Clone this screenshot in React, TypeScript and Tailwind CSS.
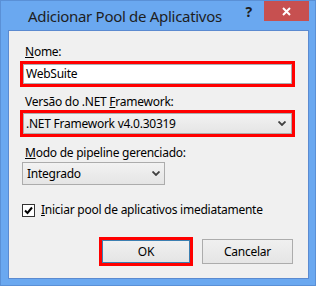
import React from "react";

const font = { fontFamily: '"Noto Sans", "Segoe UI", sans-serif' };

function Chevron() {
  return (
    <svg width="8" height="5" viewBox="0 0 8 5" className="block">
      <path d="M0.5 0.5 L4 4 L7.5 0.5" fill="none" stroke="#404040" strokeWidth="1.8" />
    </svg>
  );
}

export default function App() {
  return (
    <div
      className="w-[316px] h-[286px] bg-[#6aa8f0] border border-[#5a90d6] flex flex-col text-[12px] tracking-[-0.25px] text-black overflow-hidden"
      style={font}
    >
      {/* title bar */}
      <div className="h-[29px] flex items-start shrink-0">
        <div className="w-[27px]" />
        <div className="text-[15px] leading-[20px] mt-[5px] text-[#1e1e1e] tracking-[-0.3px]">
          Adicionar Pool de Aplicativos
        </div>
        <div className="flex-1" />
        <div className="mt-[3px] mr-[12px] text-[14px] font-bold leading-[16px] text-[#1e1e1e]">?</div>
        <div className="w-[45px] h-[20px] bg-[#c75050] flex items-center justify-center mr-[6px]">
          <svg width="9" height="9" viewBox="0 0 9 9">
            <path d="M1 1 L8 8 M8 1 L1 8" stroke="#fff" strokeWidth="2" />
          </svg>
        </div>
      </div>

      {/* content */}
      <div className="ml-[7px] w-[301px] h-[249px] bg-[#f0f0f0] border border-[#5b8ad0] flex flex-col shrink-0">
        <div className="ml-[16px] mt-[13px] leading-[16px]">
          <span className="underline">N</span>ome:
        </div>
        <div className="ml-[11px] mt-[1px] w-[275px] h-[26px] border-[3px] border-[#ff0000] flex">
          <div className="flex-1 bg-white border border-[#abadb3] flex items-center pl-[2px] leading-[16px]">
            WebSuite
          </div>
        </div>
        <div className="ml-[16px] mt-[7px] leading-[16px]">
          Versão do .NET <span className="underline">F</span>ramework:
        </div>
        <div className="ml-[11px] mt-[0px] w-[275px] h-[27px] border-[3px] border-[#ff0000] flex">
          <div className="flex-1 bg-gradient-to-b from-[#f2f2f2] to-[#e5e5e5] border border-[#acacac] flex items-center pl-[2px] pr-[5px] leading-[16px]">
            <span className="flex-1">.NET Framework v4.0.30319</span>
            <Chevron />
          </div>
        </div>
        <div className="ml-[16px] mt-[8px] leading-[16px]">
          <span className="underline">M</span>odo de pipeline gerenciado:
        </div>
        <div className="ml-[13px] mt-[1px] w-[143px] h-[23px] bg-gradient-to-b from-[#f2f2f2] to-[#e5e5e5] border border-[#acacac] flex items-center pl-[4px] pr-[4px] leading-[16px]">
          <span className="flex-1">Integrado</span>
          <Chevron />
        </div>
        <div className="ml-[13px] mt-[18px] flex items-center h-[14px]">
          <div className="w-[13px] h-[13px] border border-[#333] bg-white flex items-center justify-center">
            <svg width="9" height="9" viewBox="0 0 9 9">
              <path d="M1 4.5 L3.5 7 L8 1.5" fill="none" stroke="#000" strokeWidth="2" />
            </svg>
          </div>
          <span className="ml-[6px] leading-[16px]">
            <span className="underline">I</span>niciar pool de aplicativos imediatamente
          </span>
        </div>
        <div className="flex mt-[20px] ml-[90px] items-center">
          <div className="w-[94px] h-[29px] border-[3px] border-[#ff0000] flex">
            <div className="flex-1 border border-[#3c7fb1] bg-gradient-to-b from-[#f0f0f0] to-[#e5e5e5] flex items-center justify-center leading-[16px]">
              OK
            </div>
          </div>
          <div className="ml-[9px] w-[91px] h-[25px] border border-[#acacac] bg-gradient-to-b from-[#f0f0f0] to-[#e5e5e5] flex items-center justify-center leading-[16px]">
            Cancelar
          </div>
        </div>
      </div>
    </div>
  );
}
